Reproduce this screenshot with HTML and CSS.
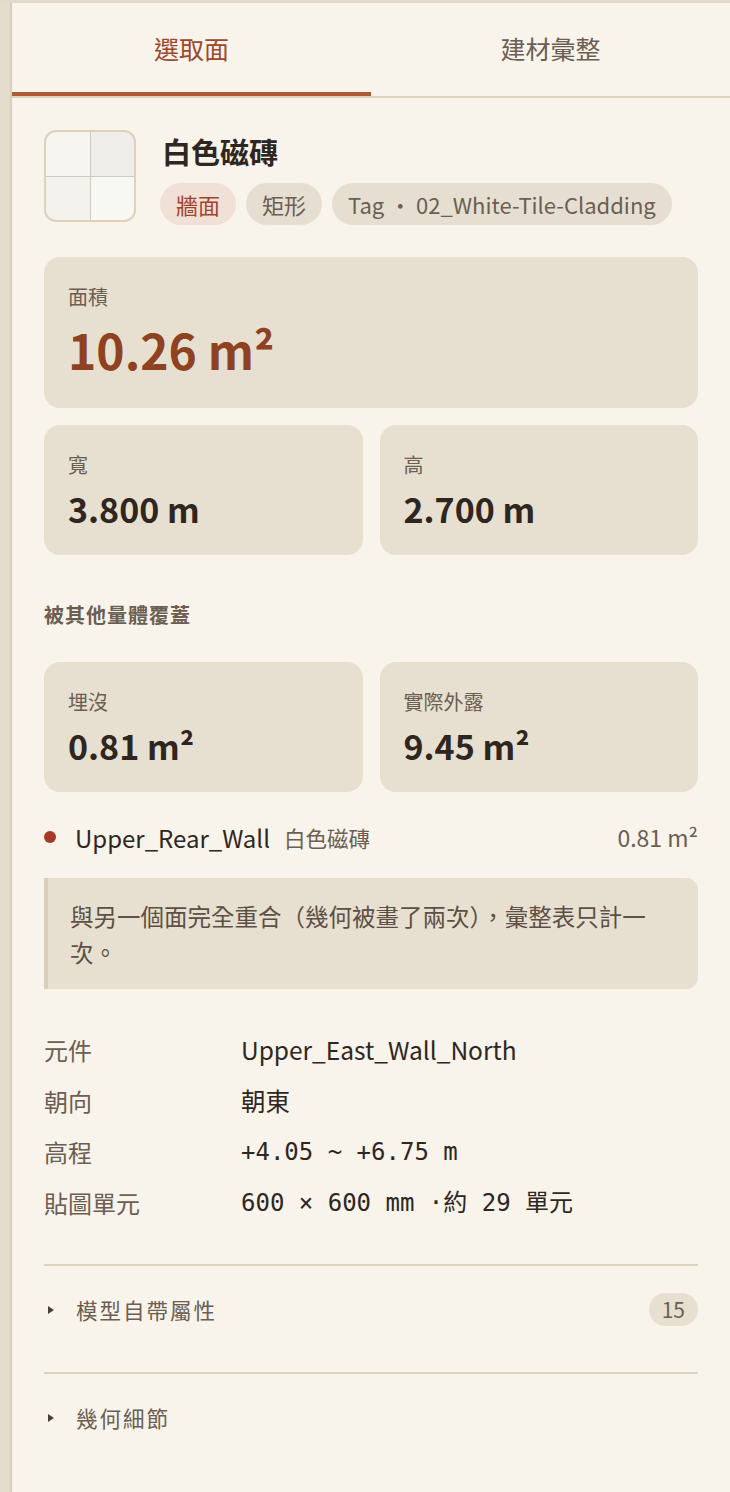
FILE: index.html
```html
<!DOCTYPE html>
<html lang="zh-Hant">
<head>
  <meta charset="UTF-8">
  <meta name="viewport" content="width=device-width, initial-scale=1.0">
  <title>選取面</title>
  <link rel="stylesheet" href="styles.css">
</head>
<body>
  <div class="app">
    <aside class="rail"></aside>
    <main class="panel">
      <nav class="tabs">
        <button class="tab active">選取面</button>
        <button class="tab">建材彙整</button>
      </nav>

      <div class="content">
        <header class="face-head">
          <div class="thumb">
            <span class="tile t1"></span>
            <span class="tile t2"></span>
            <span class="tile t3"></span>
            <span class="tile t4"></span>
          </div>
          <div class="face-info">
            <h1 class="face-name">白色磁磚</h1>
            <div class="pills">
              <span class="pill pill-wall">牆面</span>
              <span class="pill">矩形</span>
              <span class="pill">Tag ・ 02_White-Tile-Cladding</span>
            </div>
          </div>
        </header>

        <div class="stat stat-big">
          <div class="stat-label">面積</div>
          <div class="stat-value accent">10.26 m²</div>
        </div>

        <div class="stat-row">
          <div class="stat">
            <div class="stat-label">寬</div>
            <div class="stat-value">3.800 m</div>
          </div>
          <div class="stat">
            <div class="stat-label">高</div>
            <div class="stat-value">2.700 m</div>
          </div>
        </div>

        <h2 class="section-title">被其他量體覆蓋</h2>

        <div class="stat-row">
          <div class="stat">
            <div class="stat-label">埋沒</div>
            <div class="stat-value">0.81 m²</div>
          </div>
          <div class="stat">
            <div class="stat-label">實際外露</div>
            <div class="stat-value">9.45 m²</div>
          </div>
        </div>

        <div class="cover-item">
          <span class="dot"></span>
          <span class="cover-name">Upper_Rear_Wall</span>
          <span class="cover-mat">白色磁磚</span>
          <span class="cover-area">0.81 m²</span>
        </div>

        <div class="note">與另一個面完全重合（幾何被畫了兩次），彙整表只計一次。</div>

        <dl class="props">
          <dt>元件</dt>
          <dd>Upper_East_Wall_North</dd>
          <dt>朝向</dt>
          <dd>朝東</dd>
          <dt>高程</dt>
          <dd class="mono">+4.05 ~ +6.75 m</dd>
          <dt>貼圖單元</dt>
          <dd class="mono">600 × 600 mm ·約 29 單元</dd>
        </dl>

        <div class="fold">
          <span class="caret"></span>
          <span class="fold-title">模型自帶屬性</span>
          <span class="count">15</span>
        </div>
        <div class="fold">
          <span class="caret"></span>
          <span class="fold-title">幾何細節</span>
        </div>
      </div>
    </main>
  </div>
</body>
</html>
```

FILE: styles.css
```css
body {
  margin: 0;
  font-family: "Noto Sans CJK TC", "Noto Sans", sans-serif;
  color: #2e261f;
  background: #f8f3eb;
}

.app {
  display: flex;
  min-height: 100vh;
  box-sizing: border-box;
  border-top: 3px solid #e3dacb;
}

.rail {
  width: 10px;
  flex-shrink: 0;
  background: #e4dccc;
  border-right: 2px solid #d9ceba;
}

.panel {
  flex: 1;
  background: #f8f3eb;
}

/* tabs */
.tabs {
  display: flex;
  border-bottom: 2px solid #ddd3c1;
}

.tab {
  flex: 1;
  height: 93px;
  padding: 0;
  border: none;
  border-bottom: 4px solid transparent;
  background: none;
  font-family: inherit;
  font-size: 25px;
  color: #6b5e52;
  cursor: pointer;
}

.tab.active {
  color: #9c4a2a;
  border-bottom-color: #ad5a37;
}

.content {
  padding: 32px 32px 40px;
}

/* header */
.face-head {
  display: flex;
  gap: 26px;
  align-items: flex-start;
}

.thumb {
  width: 92px;
  height: 92px;
  box-sizing: border-box;
  flex-shrink: 0;
  display: grid;
  grid-template-columns: 1fr 1fr;
  gap: 1px;
  background: #cfcac0;
  border: 2px solid #ddd3bd;
  border-radius: 12px;
  overflow: hidden;
}

.tile.t1 { background: #f6f5f0; }
.tile.t2 { background: #efeeea; }
.tile.t3 { background: #f3f2ed; }
.tile.t4 { background: #f8f8f3; }

.face-name {
  margin: 2px 0 13px;
  font-size: 29px;
  line-height: 38px;
  font-weight: 700;
}

.pills {
  display: flex;
  gap: 10px;
  margin-left: -2px;
}

.pill {
  padding: 0 16px;
  height: 42px;
  line-height: 42px;
  border-radius: 21px;
  background: #e6dfd1;
  color: #6b5e52;
  font-size: 22px;
}

.pill-wall {
  background: #f0e0d6;
  color: #a4432b;
}

/* stat cards */
.stat {
  background: #e7dfcf;
  border-radius: 16px;
  padding: 26px 24px 24px;
}

.stat-big {
  margin-top: 32px;
  padding-bottom: 29px;
}

.stat-label {
  font-size: 20px;
  line-height: 28px;
  color: #6b5e52;
}

.stat-value {
  margin-top: 8px;
  font-size: 34px;
  line-height: 44px;
  font-weight: 700;
}

.stat-big .stat-value {
  font-size: 48px;
  line-height: 60px;
}

.stat-value.accent {
  color: #8e4222;
}

.stat-row {
  display: grid;
  grid-template-columns: 1fr 1fr;
  gap: 17px;
  margin-top: 17px;
}

.section-title {
  margin: 46px 0 0;
  font-size: 20px;
  line-height: 28px;
  font-weight: 700;
  letter-spacing: 1px;
  color: #6b5e52;
}

.section-title + .stat-row {
  margin-top: 33px;
}

/* covering item */
.cover-item {
  display: flex;
  align-items: center;
  margin-top: 28px;
  height: 34px;
}

.dot {
  width: 12px;
  height: 12px;
  border-radius: 50%;
  background: #a63a28;
  margin-right: 19px;
}

.cover-name {
  font-size: 24px;
  margin-right: 14px;
}

.cover-mat {
  font-size: 21.5px;
  color: #6b5e52;
}

.cover-area {
  margin-left: auto;
  font-size: 23px;
  color: #6b5e52;
}

.note {
  margin-top: 24px;
  padding: 20px 24px 19px 22px;
  background: #e7dfcf;
  border-left: 4px solid #d9ceba;
  border-radius: 0 12px 12px 0;
  font-size: 23.5px;
  line-height: 36px;
  color: #5c4f45;
}

/* properties */
.props {
  display: grid;
  grid-template-columns: 197px 1fr;
  row-gap: 15px;
  margin: 43px 0 0;
  font-size: 24px;
  line-height: 36px;
}

.props dt {
  color: #6b5e52;
}

.props dd {
  margin: 0;
  font-size: 24.5px;
}

.props .mono {
  font-family: "DejaVu Sans Mono", "Noto Sans CJK TC", monospace;
  font-size: 24px;
}

/* collapsed sections */
.fold {
  display: flex;
  align-items: center;
  border-top: 2px solid #ddd3c1;
  padding: 27px 0 46px;
  height: 33px;
}

.props + .fold {
  margin-top: 43px;
}

.caret {
  width: 0;
  height: 0;
  margin: 0 22px 0 4px;
  border-left: 6px solid #4a3f36;
  border-top: 4px solid transparent;
  border-bottom: 4px solid transparent;
}

.fold-title {
  font-size: 21.5px;
  letter-spacing: 2px;
  color: #6b5e52;
}

.count {
  margin-left: auto;
  padding: 0 13px;
  height: 33px;
  line-height: 33px;
  border-radius: 17px;
  background: #e7dfcf;
  font-size: 21px;
  color: #6b5e52;
}
```
